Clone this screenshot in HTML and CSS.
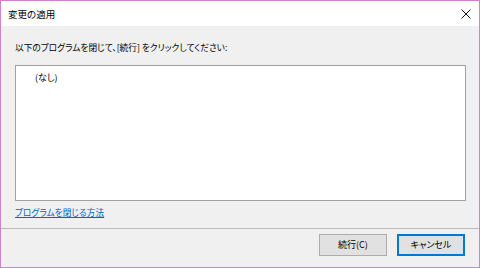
FILE: index.html
```html
<!DOCTYPE html>
<html lang="ja">
<head>
<meta charset="utf-8">
<link rel="stylesheet" href="styles.css">
</head>
<body>
<div class="window">
  <div class="titlebar">
    <span class="title">変更の適用</span>
    <svg class="close" width="10" height="10" viewBox="0 0 10 10"><path d="M0.5 0.5 L9.5 9.5 M9.5 0.5 L0.5 9.5" stroke="#111" stroke-width="1" fill="none"/></svg>
  </div>
  <div class="content">
    <p class="instruction">以下のプログラムを閉じて、[続行] をクリックしてください:</p>
    <div class="listbox"><span class="item">(なし)</span></div>
    <a class="link" href="#">プログラムを閉じる方法</a>
  </div>
  <div class="footer">
    <button class="btn">続行(C)</button>
    <button class="btn btn-default">キャンセル</button>
  </div>
</div>
</body>
</html>
```
FILE: styles.css
```css
html, body {
  margin: 0;
  padding: 0;
  background: #f0f0f0;
}
.window {
  width: 480px;
  height: 268px;
  box-sizing: border-box;
  border: 1px solid #d77fcf;
  background: #f0f0f0;
  display: flex;
  flex-direction: column;
  font-family: "Noto Sans CJK JP", "Noto Sans", sans-serif;
  font-feature-settings: "palt";
  color: #000;
}
.titlebar {
  height: 25px;
  background: #fff;
  display: flex;
  align-items: center;
  justify-content: space-between;
  padding: 0 8px 0 7px;
}
.title {
  font-size: 9.5px;
  line-height: 12px;
  color: #000;
}
.close {
  display: block;
}
.content {
  padding: 0 13px 0 14px;
  display: flex;
  flex-direction: column;
}
.instruction {
  margin: 16px 0 0 0;
  font-size: 8.7px;
  line-height: 12px;
}
.listbox {
  margin-top: 11px;
  height: 136px;
  box-sizing: border-box;
  border: 1px solid #a0a0a0;
  background: #fff;
  padding: 6px 0 0 19px;
}
.item {
  font-size: 9px;
  line-height: 12px;
  display: block;
}
.link {
  margin-top: 6px;
  font-size: 8.7px;
  line-height: 12px;
  color: #0066cc;
  text-decoration: underline;
  align-self: flex-start;
}
.footer {
  margin-top: 9px;
  border-top: 1px solid #bcbcbc;
  padding: 5px 14px 0 0;
  display: flex;
  justify-content: flex-end;
  gap: 10px;
}
.btn {
  width: 68px;
  height: 22px;
  box-sizing: border-box;
  border: 1px solid #adadad;
  background: #e1e1e1;
  font-family: "Noto Sans CJK JP", "Noto Sans", sans-serif;
  font-feature-settings: "palt";
  font-size: 9px;
  line-height: 12px;
  color: #000;
  padding: 0;
  margin: 0;
}
.btn-default {
  border-color: #0078d7;
  box-shadow: inset 0 0 0 1px #0078d7;
}
```
